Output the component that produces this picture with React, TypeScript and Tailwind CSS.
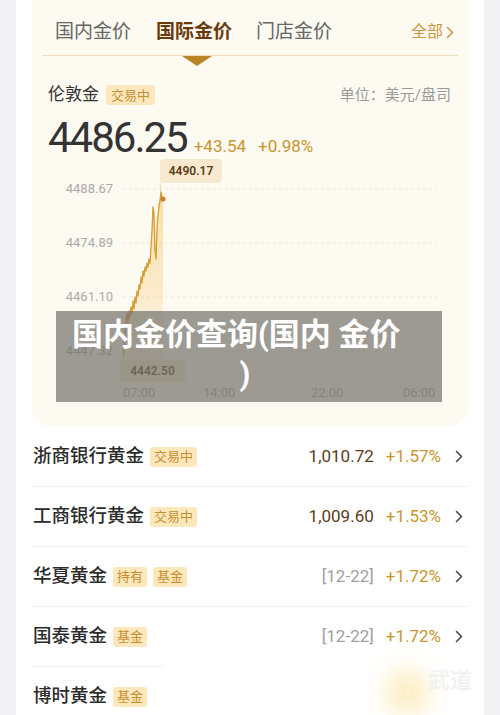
import React from "react";

const pts: [number, number][] = [
  [123, 357], [124, 345], [125, 332], [126, 318], [127, 312], [128, 322], [129, 310], [130, 316],
  [131, 306], [132, 313], [133, 300], [134, 308], [135, 296], [136, 302], [137, 290], [138, 295],
  [139, 284], [140, 288], [141, 276], [142, 282], [143, 270], [144, 275], [145, 266], [146, 270],
  [147, 262], [148, 266], [149, 258], [150, 262], [151, 246], [152, 230], [153, 206], [154, 212],
  [155, 250], [156, 258], [157, 228], [158, 214], [159, 205], [160, 200], [161, 191], [162, 196],
  [163, 198],
];

const sv = pts.map(([x, y]) => [x - 123, y - 170] as [number, number]);
const lineD = sv.map(([x, y], i) => `${i ? "L" : "M"}${x} ${y}`).join(" ");
const fillD = `${lineD} L${sv[sv.length - 1][0]} 210 L${sv[0][0]} 210 Z`;

function Chevron({ className }: { className?: string }) {
  return (
    <svg width="8" height="13" viewBox="0 0 8 13" className={className}>
      <path d="M1.5 1.5 L6.5 6.5 L1.5 11.5" fill="none" stroke="currentColor" strokeWidth="1.5" strokeLinecap="round" strokeLinejoin="round" />
    </svg>
  );
}

function Badge({ children }: { children: React.ReactNode }) {
  return (
    <span className="ml-[6px] inline-flex h-[20px] items-center rounded-[3px] bg-[#fde8bd] px-[4px] text-[13px] leading-none text-[#c58f2f]">
      {children}
    </span>
  );
}

type Row = { name: string; badges: string[]; price?: string; date?: string; pct: string };
const rows: Row[] = [
  { name: "浙商银行黄金", badges: ["交易中"], price: "1,010.72", pct: "+1.57%" },
  { name: "工商银行黄金", badges: ["交易中"], price: "1,009.60", pct: "+1.53%" },
  { name: "华夏黄金", badges: ["持有", "基金"], date: "[12-22]", pct: "+1.72%" },
  { name: "国泰黄金", badges: ["基金"], date: "[12-22]", pct: "+1.72%" },
  { name: "博时黄金", badges: ["基金"], pct: "" },
];

export default function App() {
  return (
    <div
      className="relative h-[715px] w-[500px] overflow-hidden bg-[#f3f3f5] px-[16px]"
      style={{ fontFamily: 'Roboto, "Noto Sans CJK SC", sans-serif' }}
    >
      <div className="h-full bg-white px-[16px]">
        {/* cream panel */}
        <div className="h-[426px] rounded-b-[18px] bg-[#fdfaf2]">
          <div className="flex h-[55px] items-center pl-[23px] pr-[14px] pt-[9px]">
            <span className="text-[19px] text-[#666]">国内金价</span>
            <span className="ml-[25px] text-[19px] font-bold text-[#6b3a0c]">国际金价</span>
            <span className="ml-[24px] text-[19px] text-[#666]">门店金价</span>
            <span className="ml-auto flex items-center gap-[3px] text-[16px] text-[#c8973f]">
              全部
              <Chevron />
            </span>
          </div>
          <div className="relative mx-[10px] h-px bg-[#eee0bf]">
            <div className="absolute left-[140px] top-px h-0 w-0 border-x-[15px] border-t-[10px] border-x-transparent border-t-[#b98524]" />
          </div>

          <div className="mt-[26px] flex h-[26px] items-center pl-[16px] pr-[17px]">
            <span className="text-[17px] text-[#333]">伦敦金</span>
            <span className="ml-[7px] inline-flex h-[20px] items-center rounded-[3px] bg-[#fde8bd] px-[5px] text-[13px] leading-none text-[#c58f2f]">
              交易中
            </span>
            <span className="ml-auto text-[15px] text-[#9a9a9a]">单位：美元/盘司</span>
          </div>

          <div className="mt-[9px] flex items-baseline pl-[16px]">
            <span className="h-[42px] text-[42px] leading-[42px] tracking-[-2px] text-[#333]">4486.25</span>
            <span className="ml-[7px] text-[17px] text-[#c8952e]">+43.54</span>
            <span className="ml-[12px] text-[17px] text-[#c8952e]">+0.98%</span>
          </div>

          {/* chart */}
          <div className="relative mt-[11px]">
            <div className="flex">
              <div className="flex w-[81px] flex-col items-end gap-[38.3px] pt-[10px] text-[13px] leading-[16px] text-[#aaa]">
                <span>4488.67</span>
                <span>4474.89</span>
                <span>4461.10</span>
                <span>4447.32</span>
              </div>
              <svg width="314" height="210" viewBox="0 0 314 210" className="ml-[10px] block">
                <defs>
                  <linearGradient id="gf" x1="0" y1="0" x2="0" y2="1">
                    <stop offset="0" stopColor="#f6c66a" stopOpacity="0.55" />
                    <stop offset="1" stopColor="#f6c66a" stopOpacity="0.04" />
                  </linearGradient>
                </defs>
                {[18, 72, 126, 181].map((y) => (
                  <line key={y} x1="0" x2="314" y1={y} y2={y} stroke="#efe6d3" strokeWidth="1" strokeDasharray="3 3" />
                ))}
                <path d={fillD} fill="url(#gf)" />
                <path d={lineD} fill="none" stroke="#d69c35" strokeWidth="1.3" strokeLinejoin="round" />
                <line x1="37" y1="12" x2="38" y2="21" stroke="#e6d3a8" strokeWidth="1" />
                <line x1="0" y1="183" x2="0" y2="189" stroke="#e6d3a8" strokeWidth="1" />
                <circle cx="40" cy="28" r="2.6" fill="#c4882a" />
              </svg>
            </div>
            <div className="flex h-[24px] items-center pl-[91px] text-[13px] text-[#aaa]">
              <span className="w-[32px]">07:00</span>
              <span className="ml-[48px] w-[32px]">14:00</span>
              <span className="ml-[76px] w-[32px]">22:00</span>
              <span className="ml-[60px] w-[32px]">06:00</span>
            </div>
            <div className="absolute left-[128px] top-[-12px] flex h-[24px] w-[62px] items-center justify-center rounded-[4px] bg-[#f6e9cf] text-[12px] font-semibold text-[#5b3b14]">
              4490.17
            </div>
            <div className="absolute left-[88px] top-[189px] flex h-[23px] w-[65px] items-center justify-center rounded-[4px] bg-[#f6e9cf] text-[12px] font-semibold text-[#5b3b14]">
              4442.50
            </div>
          </div>
        </div>

        {/* rows */}
        <div className="mt-[1px]">
          {rows.map((r) => (
            <div key={r.name} className="flex h-[60px] items-center border-b border-[#f0f0f0] pl-[1px] pr-[5px]">
              <span className="text-[18.5px] font-medium text-[#2b2b2b]">{r.name}</span>
              {r.badges.map((b) => (
                <Badge key={b}>{b}</Badge>
              ))}
              {r.pct && (
                <div className="ml-auto flex items-center">
                  {r.price && <span className="text-[17px] text-[#5b3d1a]">{r.price}</span>}
                  {r.date && <span className="text-[17px] text-[#a0a0a0]">{r.date}</span>}
                  <span className="ml-[12px] text-[17px] text-[#c8952e]">{r.pct}</span>
                  <Chevron className="ml-[14px] text-[#444]" />
                </div>
              )}
            </div>
          ))}
        </div>
      </div>

      {/* title overlay */}
      <div className="absolute left-[56px] top-[311px] h-[91px] w-[386px] bg-[rgba(118,117,110,0.72)] pt-[4px] text-[31px] font-bold leading-[40px] text-white">
        <div className="whitespace-nowrap pl-[16px]">国内金价查询(国内 金价</div>
        <div className="pr-[8px] text-center">)</div>
      </div>

      {/* watermark smear */}
      <div className="absolute bottom-0 left-[163px] right-[17px] top-[650px] bg-gradient-to-b from-white/0 via-white via-[25%] to-white" />
      <div className="absolute left-[385px] top-[670px] h-[45px] w-[45px] rounded-full bg-[#fbe5a6]/70 blur-md" />
      <span className="absolute left-[428px] top-[664px] text-[22px] font-bold text-[#f2f2f2]">武道</span>
    </div>
  );
}
